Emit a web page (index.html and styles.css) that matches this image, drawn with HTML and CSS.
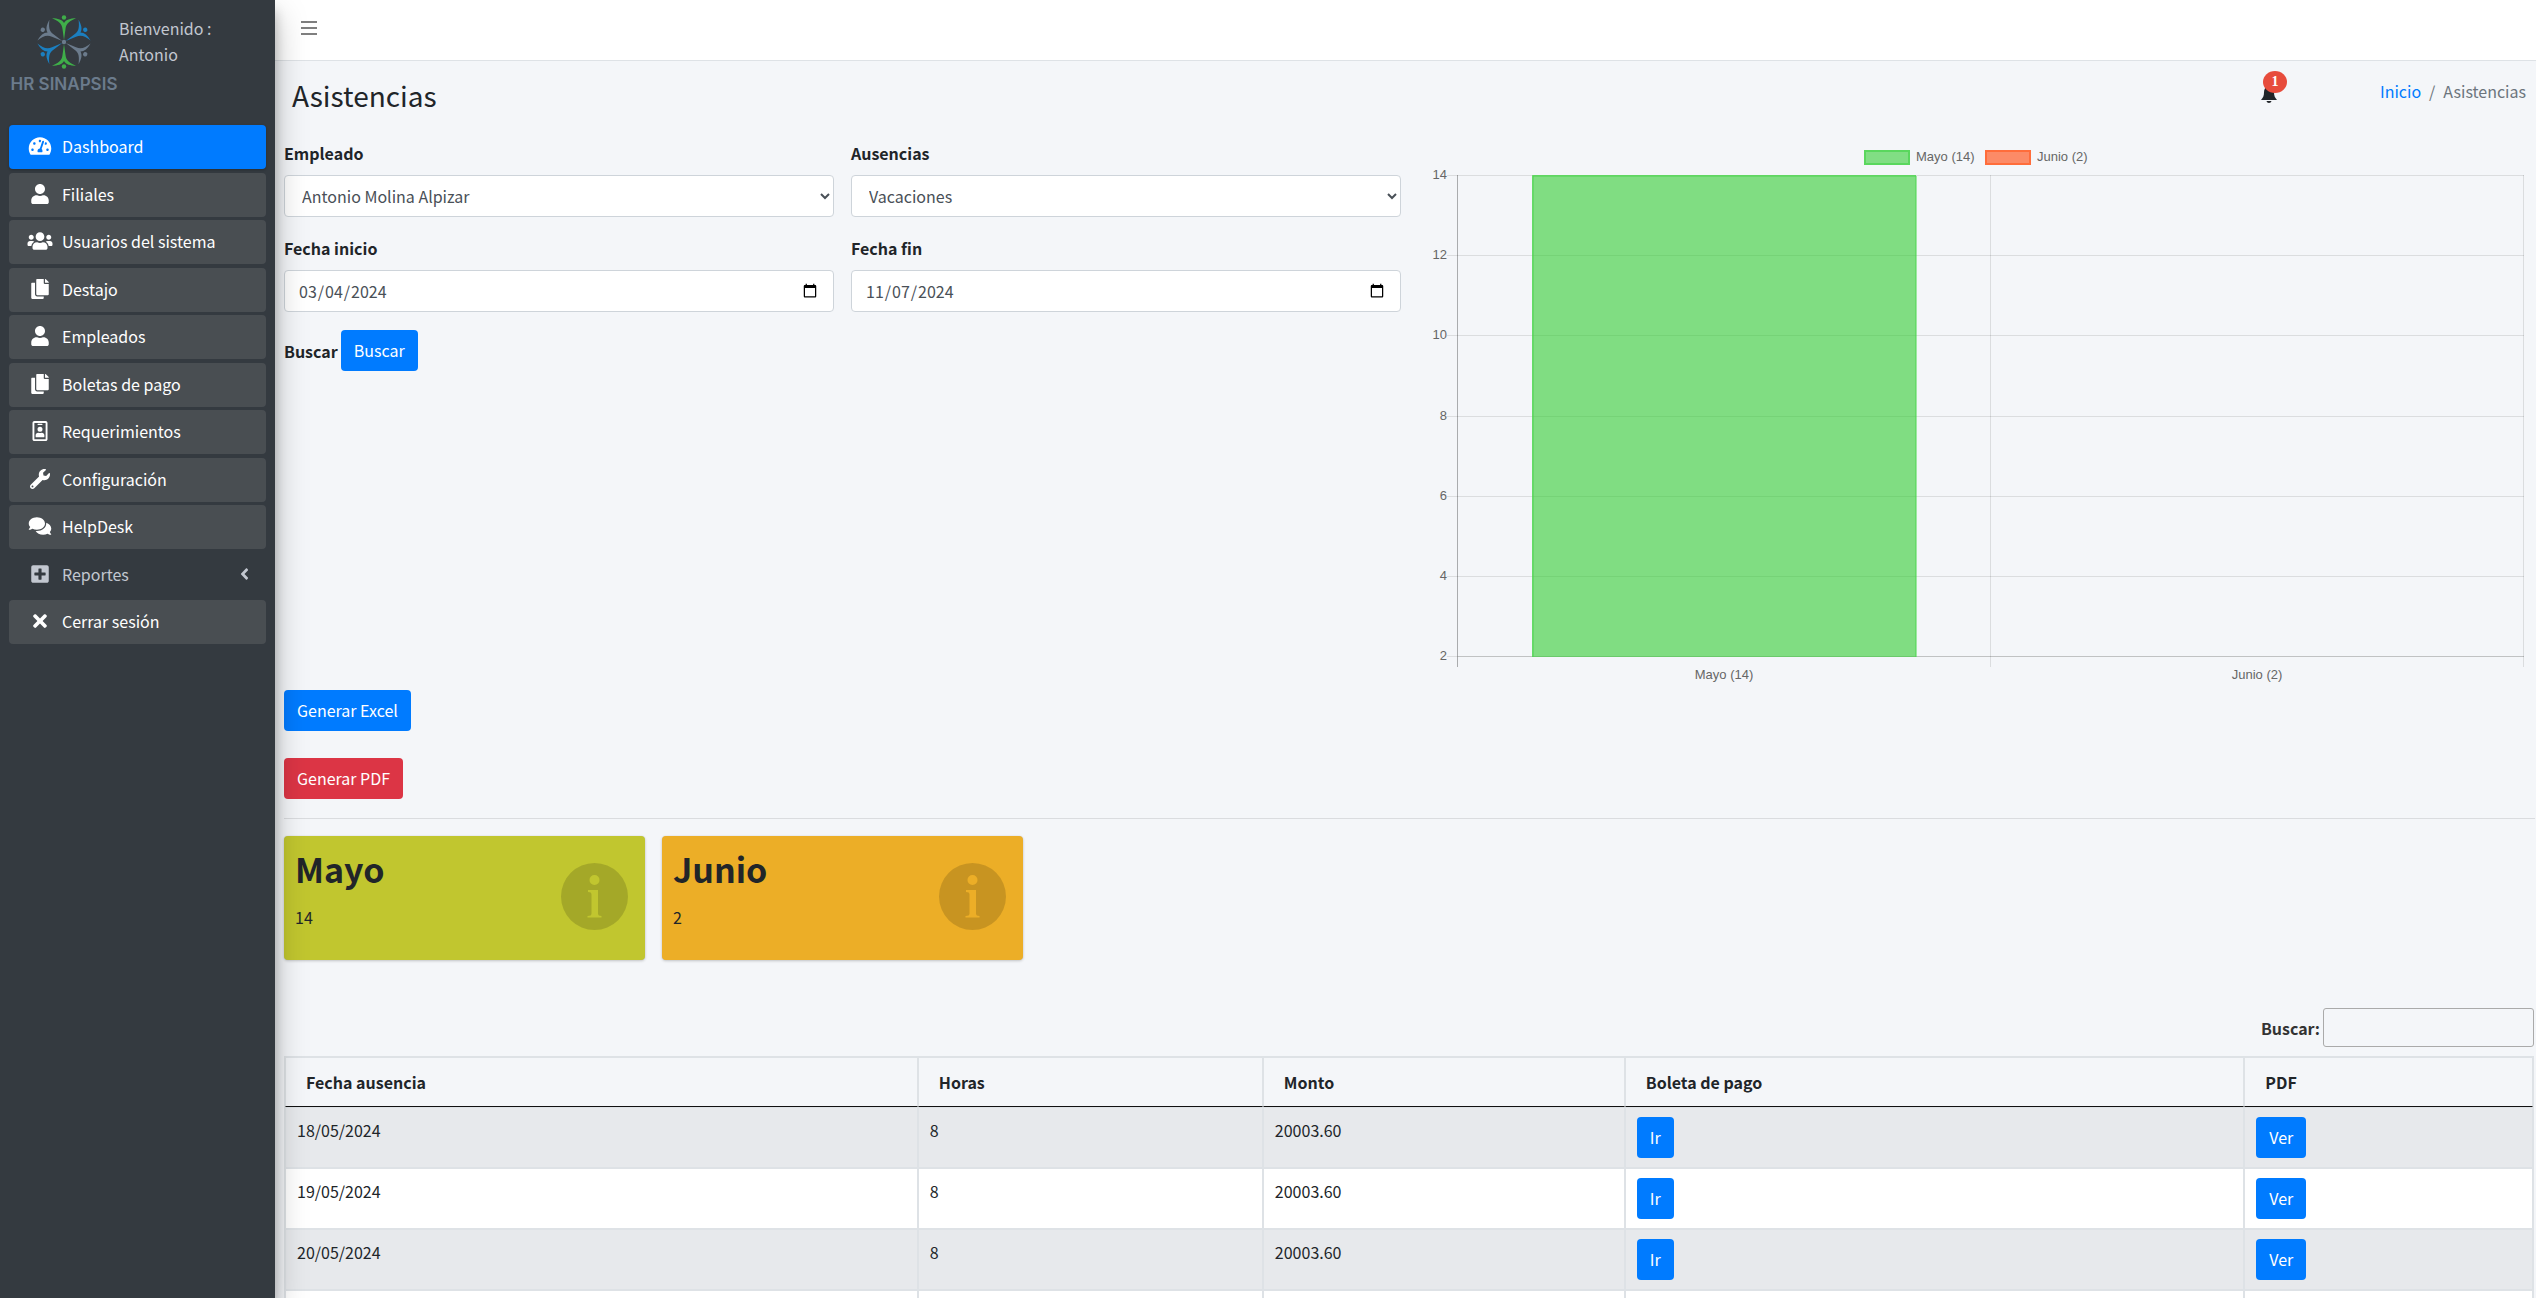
FILE: index.html
```html
<!DOCTYPE html>
<html lang="es">
<head>
<meta charset="utf-8">
<title>Asistencias</title>
<link rel="stylesheet" href="styles.css">
</head>
<body>
<aside class="sidebar">
  <div class="user-panel">
    <svg class="logo" viewBox="0 0 110 80" role="img" aria-label="HR Sinapsis">
      <defs>
        <g id="figure">
          <circle cx="0" cy="-24.500" r="2.200"/>
          <path d="M0-2L-1.500-13C-2-19-6-21-12-23.800C-6-23.600-2-22.500 0-19C2-22.500 6-23.600 12-23.800C6-21 2-19 1.500-13Z"/>
        </g>
      </defs>
      <g transform="translate(55 27)">
        <use href="#figure" class="logo-green"/>
        <use href="#figure" class="logo-blue" transform="rotate(60)"/>
        <use href="#figure" class="logo-gray" transform="rotate(120)"/>
        <use href="#figure" class="logo-green" transform="rotate(180)"/>
        <use href="#figure" class="logo-blue" transform="rotate(240)"/>
        <use href="#figure" class="logo-gray" transform="rotate(300)"/>
        <circle class="logo-gray" r="2.200"/>
      </g>
      <text class="logo-name" x="55" y="75">HR SINAPSIS</text>
    </svg>
    <p class="welcome">Bienvenido :<br>Antonio</p>
  </div>
  <nav>
    <ul class="menu">
      <li><a class="item current" href="#"><svg class="icon" viewBox="0 0 576 512"><path d="M288 32C128.940 32 0 160.940 0 320c0 52.800 14.250 102.260 39.060 144.800 5.610 9.620 16.300 15.200 27.440 15.200h443c11.140 0 21.830-5.580 27.440-15.200C561.750 422.260 576 372.800 576 320c0-159.060-128.940-288-288-288zm0 64c14.710 0 26.580 10.130 30.320 23.650-1.110 2.260-2.640 4.230-3.450 6.670l-9.220 27.670c-5.130 3.490-10.970 6.010-17.640 6.010-17.670 0-32-14.330-32-32S270.330 96 288 96zM96 384c-17.670 0-32-14.330-32-32s14.330-32 32-32 32 14.330 32 32-14.330 32-32 32zm48-160c-17.670 0-32-14.330-32-32s14.330-32 32-32 32 14.330 32 32-14.330 32-32 32zm246.770-72.410l-61.330 184C343.130 347.330 352 364.540 352 384c0 11.720-3.380 22.550-8.880 32H232.880c-5.500-9.450-8.880-20.280-8.880-32 0-33.940 26.500-61.430 59.900-63.590l61.340-184.010c4.170-12.560 17.730-19.450 30.360-15.170 12.570 4.190 19.350 17.790 15.170 30.360zm14.660 57.200l15.520-46.550c3.470-1.290 7.130-2.230 11.050-2.230 17.670 0 32 14.330 32 32s-14.330 32-32 32c-11.380-.01-20.890-6.280-26.570-15.220zM480 384c-17.670 0-32-14.330-32-32s14.330-32 32-32 32 14.330 32 32-14.330 32-32 32z"/></svg>Dashboard</a></li>
      <li><a class="item" href="#"><svg class="icon" viewBox="0 0 448 512"><path id="icon-user" d="M224 256c70.700 0 128-57.300 128-128S294.700 0 224 0 96 57.300 96 128s57.300 128 128 128zm89.600 32h-16.700c-22.200 10.200-46.900 16-72.900 16s-50.600-5.800-72.900-16h-16.700C60.200 288 0 348.200 0 422.400V464c0 26.500 21.500 48 48 48h352c26.500 0 48-21.500 48-48v-41.600c0-74.200-60.200-134.400-134.400-134.400z"/></svg>Filiales</a></li>
      <li><a class="item" href="#"><svg class="icon" viewBox="0 0 640 512"><path d="M96 224c35.300 0 64-28.700 64-64s-28.700-64-64-64-64 28.700-64 64 28.700 64 64 64zm448 0c35.300 0 64-28.700 64-64s-28.700-64-64-64-64 28.700-64 64 28.700 64 64 64zm32 32h-64c-17.600 0-33.500 7.100-45.100 18.600 40.300 22.100 68.900 62 75.100 109.400h66c17.700 0 32-14.300 32-32v-32c0-35.300-28.700-64-64-64zm-256 0c61.900 0 112-50.100 112-112S381.900 32 320 32 208 82.100 208 144s50.100 112 112 112zm76.800 32h-8.300c-20.800 10-43.900 16-68.500 16s-47.600-6-68.500-16h-8.300C179.600 288 128 339.600 128 403.200V432c0 26.500 21.500 48 48 48h288c26.500 0 48-21.500 48-48v-28.800c0-63.600-51.600-115.200-115.200-115.200zm-223.700-13.400C161.500 263.100 145.600 256 128 256H64c-35.300 0-64 28.700-64 64v32c0 17.700 14.300 32 32 32h65.900c6.300-47.400 34.900-87.300 75.200-109.400z"/></svg>Usuarios del sistema</a></li>
      <li><a class="item" href="#"><svg class="icon" viewBox="0 0 448 512"><path id="icon-copy" d="M320 448v40c0 13.255-10.745 24-24 24H24c-13.255 0-24-10.745-24-24V120c0-13.255 10.745-24 24-24h72v296c0 30.879 25.121 56 56 56h168zm0-344V0H152c-13.255 0-24 10.745-24 24v368c0 13.255 10.745 24 24 24h272c13.255 0 24-10.745 24-24V128H344c-13.200 0-24-10.800-24-24zm120.971-31.029L375.029 7.029A24 24 0 0 0 358.059 0H352v96h96v-6.059a24 24 0 0 0-7.029-16.970z"/></svg>Destajo</a></li>
      <li><a class="item" href="#"><svg class="icon" viewBox="0 0 448 512"><use href="#icon-user"/></svg>Empleados</a></li>
      <li><a class="item" href="#"><svg class="icon" viewBox="0 0 448 512"><use href="#icon-copy"/></svg>Boletas de pago</a></li>
      <li><a class="item" href="#"><svg class="icon" viewBox="0 0 384 512"><path fill-rule="evenodd" d="M48 0h288c26 0 48 22 48 48v416c0 26-22 48-48 48H48c-26 0-48-22-48-48V48C0 22 22 0 48 0zm0 48v416h288V48zM144 72h96c9 0 16 7 16 16s-7 16-16 16h-96c-9 0-16-7-16-16s7-16 16-16zM192 144a64 64 0 1 1 0 128 64 64 0 0 1 0-128zM80 400v-35c0-37 30-67 67-67 12 4 28 8 45 8s33-4 45-8c37 0 67 30 67 67v35c0 9-8 16-18 16H98c-10 0-18-7-18-16z"/></svg>Requerimientos</a></li>
      <li><a class="item" href="#"><svg class="icon" viewBox="0 0 512 512"><path d="M507.730 109.100c-2.240-9.030-13.540-12.090-20.120-5.510l-74.360 74.360-67.880-11.310-11.310-67.880 74.360-74.360c6.620-6.620 3.430-17.900-5.660-20.160-47.380-11.740-99.550.91-136.580 37.930-39.640 39.640-50.550 97.100-34.050 147.200L18.740 402.760c-24.990 24.990-24.990 65.510 0 90.500 24.990 24.990 65.510 24.990 90.500 0l213.210-213.210c50.120 16.710 107.470 5.680 147.370-34.220 37.070-37.070 49.700-89.320 37.910-136.730zM64 472c-13.250 0-24-10.750-24-24 0-13.260 10.750-24 24-24s24 10.740 24 24c0 13.250-10.750 24-24 24z"/></svg>Configuración</a></li>
      <li><a class="item" href="#"><svg class="icon" viewBox="0 0 576 512"><path d="M416 192c0-88.400-93.100-160-208-160S0 103.600 0 192c0 34.300 14.100 65.900 38 92-13.400 30.200-35.500 54.200-35.800 54.500-2.200 2.300-2.800 5.700-1.500 8.700S4.800 352 8 352c36.600 0 66.900-12.300 88.700-25 32.200 15.700 70.300 25 111.300 25 114.900 0 208-71.600 208-160zm122 220c23.900-26 38-57.700 38-92 0-66.900-53.500-124.200-129.300-148.100.9 6.600 1.300 13.300 1.300 20.100 0 105.900-107.700 192-240 192-10.800 0-21.300-.8-31.700-1.900C207.800 439.600 281.800 480 368 480c41 0 79.100-9.200 111.300-25 21.800 12.700 52.100 25 88.700 25 3.200 0 6.100-1.900 7.300-4.800 1.300-2.900.7-6.300-1.500-8.700-.3-.3-22.400-24.200-35.800-54.500z"/></svg>HelpDesk</a></li>
      <li><a class="item plain" href="#"><svg class="icon" viewBox="0 0 448 512"><path d="M400 32H48C21.500 32 0 53.500 0 80v352c0 26.500 21.500 48 48 48h352c26.500 0 48-21.500 48-48V80c0-26.500-21.500-48-48-48zm-32 252c0 6.600-5.400 12-12 12h-92v92c0 6.600-5.400 12-12 12h-56c-6.600 0-12-5.400-12-12v-92H92c-6.600 0-12-5.400-12-12v-56c0-6.600 5.400-12 12-12h92v-92c0-6.600 5.400-12 12-12h56c6.600 0 12 5.400 12 12v92h92c6.600 0 12 5.400 12 12v56z"/></svg>Reportes<svg class="arrow" viewBox="0 0 256 512"><path d="M31.700 239l136-136c9.400-9.400 24.600-9.400 33.900 0l22.600 22.600c9.400 9.400 9.400 24.600 0 33.900L127.900 256l96.400 96.400c9.400 9.400 9.400 24.600 0 33.900L201.700 409c-9.400 9.400-24.600 9.400-33.900 0l-136-136c-9.500-9.400-9.500-24.600-.1-34z"/></svg></a></li>
      <li><a class="item" href="#"><svg class="icon" viewBox="0 0 352 512"><path d="M242.720 256l100.070-100.070c12.280-12.280 12.280-32.190 0-44.480l-22.240-22.240c-12.280-12.280-32.190-12.280-44.480 0L176 189.280 75.930 89.210c-12.280-12.280-32.190-12.280-44.480 0L9.210 111.450c-12.280 12.280-12.280 32.190 0 44.480L109.280 256 9.210 356.070c-12.280 12.280-12.280 32.190 0 44.480l22.240 22.240c12.280 12.280 32.200 12.280 44.480 0L176 322.720l100.070 100.070c12.280 12.280 32.200 12.280 44.480 0l22.240-22.240c12.280-12.280 12.280-32.190 0-44.480L242.720 256z"/></svg>Cerrar sesión</a></li>
    </ul>
  </nav>
</aside>

<div class="page">
  <header class="topbar">
    <button class="toggle" type="button" aria-label="Menú"><svg viewBox="0 0 16 14"><path d="M0 0h16v2H0zM0 6h16v2H0zM0 12h16v2H0z"/></svg></button>
  </header>
  <main class="content">
    <div class="heading">
      <h1>Asistencias</h1>
      <div class="heading-side">
        <button class="bell" type="button" aria-label="Notificaciones">
          <svg viewBox="0 0 16 18"><path d="M8 0c1 0 1.500.6 1.500 1.500C12 2.300 13 4.500 13 7.500c0 3.500 1 5 3 7.500H0c2-2.500 3-4 3-7.500C3 4.500 4 2.300 6.500 1.500 6.500.6 7 0 8 0zM5.500 16h5c-.3 1.300-1.200 2-2.500 2s-2.200-.7-2.500-2z"/></svg>
          <span class="badge">1</span>
        </button>
        <ol class="breadcrumb"><li><a href="#">Inicio</a></li><li>Asistencias</li></ol>
      </div>
    </div>

    <div class="overview">
      <form class="filters">
        <div class="field"><label for="empleado">Empleado</label><select id="empleado" class="control"><option>Antonio Molina Alpizar</option></select></div>
        <div class="field"><label for="ausencias">Ausencias</label><select id="ausencias" class="control"><option>Vacaciones</option></select></div>
        <div class="field"><label for="inicio">Fecha inicio</label><input id="inicio" class="control" type="date" value="2024-03-04"></div>
        <div class="field"><label for="fin">Fecha fin</label><input id="fin" class="control" type="date" value="2024-11-07"></div>
        <div class="submit"><label for="buscar">Buscar</label><button id="buscar" class="btn" type="button">Buscar</button></div>
      </form>
      <svg class="chart" viewBox="0 0 1117 550" role="img" aria-label="Ausencias por mes">
        <g class="legend">
          <rect class="green" x="447" y="11" width="44" height="13"/><text x="498" y="21">Mayo (14)</text>
          <rect class="orange" x="568" y="11" width="44" height="13"/><text x="619" y="21">Junio (2)</text>
        </g>
        <path class="grid" d="M29 35.500H1106M29 115.500H1106M29 195.500H1106M29 276.500H1106M29 356.500H1106M29 436.500H1106M29 516.500H1106M572.500 35V527M1105.500 35V527"/>
        <path class="axis" d="M39.500 35V527"/>
        <path class="base" d="M40 516.500H1106"/>
        <rect class="bar-fill" x="114" y="35" width="384" height="482"/>
        <path class="bar-edge" d="M115 517V36H498V517"/>
        <g class="y-labels">
          <text x="29" y="39">14</text><text x="29" y="119">12</text><text x="29" y="199">10</text><text x="29" y="280">8</text><text x="29" y="360">6</text><text x="29" y="440">4</text><text x="29" y="520">2</text>
        </g>
        <g class="x-labels"><text x="306" y="539">Mayo (14)</text><text x="839" y="539">Junio (2)</text></g>
      </svg>
    </div>

    <div class="exports">
      <button class="btn" type="button">Generar Excel</button>
      <button class="btn danger" type="button">Generar PDF</button>
    </div>
    <hr>

    <div class="cards">
      <section class="card lime"><div><h2>Mayo</h2><p>14</p></div>
        <svg class="info" viewBox="0 0 67 67"><path id="icon-info" fill-rule="evenodd" d="M33.500 0a33.500 33.500 0 1 1 0 67 33.500 33.500 0 0 1 0-67zm0 12a5 5 0 1 0 0 10 5 5 0 0 0 0-10zM27 27v2c2.500 0 3.500.8 3.500 2.500v19c0 1.700-1 2.500-4 2.500v1.500h14V53c-2.500 0-3.500-.8-3.500-2.500V27z"/></svg></section>
      <section class="card amber"><div><h2>Junio</h2><p>2</p></div>
        <svg class="info" viewBox="0 0 67 67"><use href="#icon-info"/></svg></section>
    </div>

    <div class="search"><label for="filtro">Buscar:</label><input id="filtro" type="search"></div>
    <table class="data">
      <colgroup><col class="c-date"><col class="c-hours"><col class="c-amount"><col class="c-slip"><col></colgroup>
      <thead><tr><th>Fecha ausencia</th><th>Horas</th><th>Monto</th><th>Boleta de pago</th><th>PDF</th></tr></thead>
      <tbody>
        <tr><td>18/05/2024</td><td>8</td><td>20003.60</td><td><button class="btn" type="button">Ir</button></td><td><button class="btn" type="button">Ver</button></td></tr>
        <tr><td>19/05/2024</td><td>8</td><td>20003.60</td><td><button class="btn" type="button">Ir</button></td><td><button class="btn" type="button">Ver</button></td></tr>
        <tr><td>20/05/2024</td><td>8</td><td>20003.60</td><td><button class="btn" type="button">Ir</button></td><td><button class="btn" type="button">Ver</button></td></tr>
        <tr><td></td><td></td><td></td><td></td><td></td></tr>
      </tbody>
    </table>
  </main>
</div>
</body>
</html>
```
FILE: styles.css
```css
* { box-sizing: border-box; }
body {
  margin: 0;
  height: 100vh;
  overflow: hidden;
  display: flex;
  background: #f4f6f9;
  color: #212529;
  font: 16px/26px "Noto Sans CJK SC", "Noto Sans", sans-serif;
}
h1, h2, p, ul, ol { margin: 0; padding: 0; }
ul, ol { list-style: none; }
a { color: #007bff; text-decoration: none; }
button, input, select { font: inherit; }
label { font-weight: 700; }

/* Sidebar */
.sidebar {
  position: relative;
  z-index: 2;
  flex: 0 0 275px;
  padding: 0 9px;
  background: #343a40;
  box-shadow: 0 15px 31px rgba(0,0,0,.25), 0 11px 11px rgba(0,0,0,.22);
}
.user-panel { display: flex; height: 125px; padding-top: 15px; color: #c2c7d0; }
.logo { width: 110px; height: 80px; overflow: visible; }
.logo-green { fill: #3fae49; }
.logo-blue { fill: #1b7fc0; }
.logo-gray { fill: #6b7b8c; }
.logo-name { fill: #6b7b8c; font: 600 17px Inter, sans-serif; text-anchor: middle; }
.menu li { margin-bottom: 4px; }
.menu li:nth-child(even) { margin-bottom: 3px; }
.item {
  display: flex;
  align-items: center;
  height: 44px;
  padding: 0 17px 2px;
  border-radius: 4px;
  background: #494e52;
  color: #fff;
}
.icon { width: 28px; height: 20px; margin-right: 8px; fill: currentColor; }
.item.current { background: #007bff; box-shadow: 0 1px 3px rgba(0,0,0,.24); }
.item.plain { background: none; color: #c2c7d0; }
.arrow { width: 9px; height: 18px; margin-left: auto; fill: currentColor; }

/* Page */
.page { flex: 1; min-width: 0; }
.topbar { height: 61px; padding: 21px 26px; background: #fff; border-bottom: 1px solid #dee2e6; }
.toggle { display: block; padding: 0; border: 0; background: none; }
.toggle svg { display: block; width: 16px; height: 14px; fill: #7f7f7f; }
.content { padding: 0 1px 0 9px; }
.heading { display: flex; justify-content: space-between; height: 79px; padding: 17px 9px 0 8px; }
h1 { font-size: 28px; line-height: 34px; font-weight: 400; }
.heading-side { display: flex; gap: 103px; }
.bell { position: relative; align-self: flex-start; margin-top: 7px; padding: 0; border: 0; background: none; }
.bell svg { display: block; width: 16px; height: 18px; fill: #212529; }
.badge {
  position: absolute;
  left: 2px;
  top: -14px;
  width: 24px;
  height: 22px;
  border-radius: 50%;
  background: #e74c3c;
  color: #fff;
  font: 700 14px/22px "Liberation Serif", serif;
  text-align: center;
}
.breadcrumb { display: flex; color: #6c757d; }
.breadcrumb li + li::before { content: "/"; padding: 0 8px; }

.overview { display: grid; grid-template-columns: 1fr 1fr; gap: 17px; align-items: start; }
.filters { display: grid; grid-template-columns: 1fr 1fr; column-gap: 17px; }
.field { height: 95px; }
.field label { display: block; margin-bottom: 9px; }
.control {
  display: block;
  width: 100%;
  height: 42px;
  padding: 6px 13px;
  border: 1px solid #ced4da;
  border-radius: 4px;
  background: #fff;
  color: #495057;
}
.submit { display: flex; align-items: center; gap: 3px; }
.btn {
  height: 41px;
  padding: 0 13px 2px;
  border: 0;
  border-radius: 4px;
  background: #007bff;
  color: #fff;
}
.btn.danger { background: #dc3545; }

/* Chart */
.chart { display: block; width: 100%; font: 13px "Liberation Sans", Arial, sans-serif; fill: #666; }
.green { fill: #81de84; stroke: #5ad75e; stroke-width: 2; }
.orange { fill: #fc8b67; stroke: #ff6d3b; stroke-width: 2; }
.grid { stroke: rgba(0,0,0,.1); }
.axis { stroke: rgba(0,0,0,.3); }
.base { stroke: rgba(0,0,0,.12); }
.bar-fill { fill: rgba(50,205,50,.6); }
.bar-edge { fill: none; stroke: #4bd64e; stroke-width: 1; }
.y-labels { text-anchor: end; }
.x-labels { text-anchor: middle; }

.exports { display: flex; flex-direction: column; align-items: flex-start; gap: 27px; }
hr { height: 1px; margin: 19px 0 17px; border: 0; background: #dadcdf; }

/* Month cards */
.cards { display: flex; gap: 17px; }
.card {
  display: flex;
  justify-content: space-between;
  width: 361px;
  height: 124px;
  padding: 9px 17px 9px 11px;
  border-radius: 4px;
  box-shadow: 0 1px 3px rgba(0,0,0,.2), 0 0 1px rgba(0,0,0,.13);
}
.lime { background: #c1c62f; }
.amber { background: #ecae27; }
.card h2 { margin-bottom: 12px; font-size: 34px; line-height: 47px; }
.info { width: 67px; height: 67px; margin-top: 18px; fill: rgba(0,0,0,.15); }

/* Table */
.search { display: flex; justify-content: flex-end; align-items: center; gap: 3px; margin: 48px 1px 9px 0; }
.search label { color: #333; }
.search input { width: 211px; height: 39px; border: 1px solid #aaa; border-radius: 3px; background: transparent; }
.data {
  width: calc(100% - 1px);
  table-layout: fixed;
  border: 1px solid #dee2e6;
  border-collapse: separate;
  border-spacing: 0;
}
.c-date { width: 28.15%; }
.c-hours { width: 15.35%; }
.c-amount { width: 16.1%; }
.c-slip { width: 27.56%; }
.data th, .data td { border: 1px solid #dee2e6; text-align: left; vertical-align: top; }
.data th { padding: 11px 20px; border-bottom-color: #111; }
.data td { height: 61px; padding: 9px 11px; background: #fff; }
.data tr:nth-child(odd) td { background: #e7e9ec; }
.data .btn { display: block; }
```
